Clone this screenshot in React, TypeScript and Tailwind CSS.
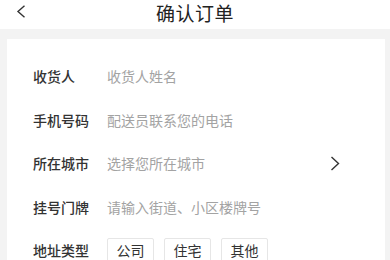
import React from 'react';

const ROWS = [
  { label: '收货人', placeholder: '收货人姓名' },
  { label: '手机号码', placeholder: '配送员联系您的电话' },
  { label: '所在城市', placeholder: '选择您所在城市', arrow: true },
  { label: '挂号门牌', placeholder: '请输入街道、小区楼牌号' },
];

const TYPES = ['公司', '住宅', '其他'];

export default function App() {
  return (
    <div
      className="w-[390px] h-[260px] overflow-hidden bg-[#f3f3f3]"
      style={{ fontFamily: '"Noto Sans CJK SC", "Noto Sans", sans-serif' }}
    >
      {/* Header */}
      <div className="relative h-[29px] bg-white flex items-center justify-center">
        <svg className="absolute left-[16px] top-[5px]" width="10" height="13" viewBox="0 0 10 13" fill="none">
          <path d="M8.5 0.8 L2 6.5 L8.5 12.2" stroke="#333" strokeWidth="1.4" />
        </svg>
        <h1 className="text-[19px] leading-none text-[#222] tracking-[0.5px] -mt-[5px]">确认订单</h1>
      </div>

      {/* Card */}
      <div className="mt-[10px] ml-[7px] mr-[5px] bg-white pt-[16px] h-[300px]">
        {ROWS.map((r, i) => (
          <div key={i} className="h-[43.5px] flex items-center pl-[26px] pr-[45px]">
            <span className="w-[74px] text-[14px] text-[#333] font-medium">{r.label}</span>
            <span className="flex-1 text-[14px] text-[#a3a3a3]">{r.placeholder}</span>
            {r.arrow && (
              <svg width="10" height="15" viewBox="0 0 10 15" fill="none">
                <path d="M1.5 1 L8.5 7.5 L1.5 14" stroke="#333" strokeWidth="1.4" />
              </svg>
            )}
          </div>
        ))}
        <div className="h-[43.5px] flex items-center pl-[26px]">
          <span className="w-[74px] text-[14px] text-[#333] font-medium">地址类型</span>
          <div className="flex gap-[10px]">
            {TYPES.map((t) => (
              <span
                key={t}
                className="w-[47px] h-[26px] flex items-center justify-center border border-[#e6e6e6] rounded-[2px] text-[14px] text-[#333]"
              >
                {t}
              </span>
            ))}
          </div>
        </div>
      </div>
    </div>
  );
}
